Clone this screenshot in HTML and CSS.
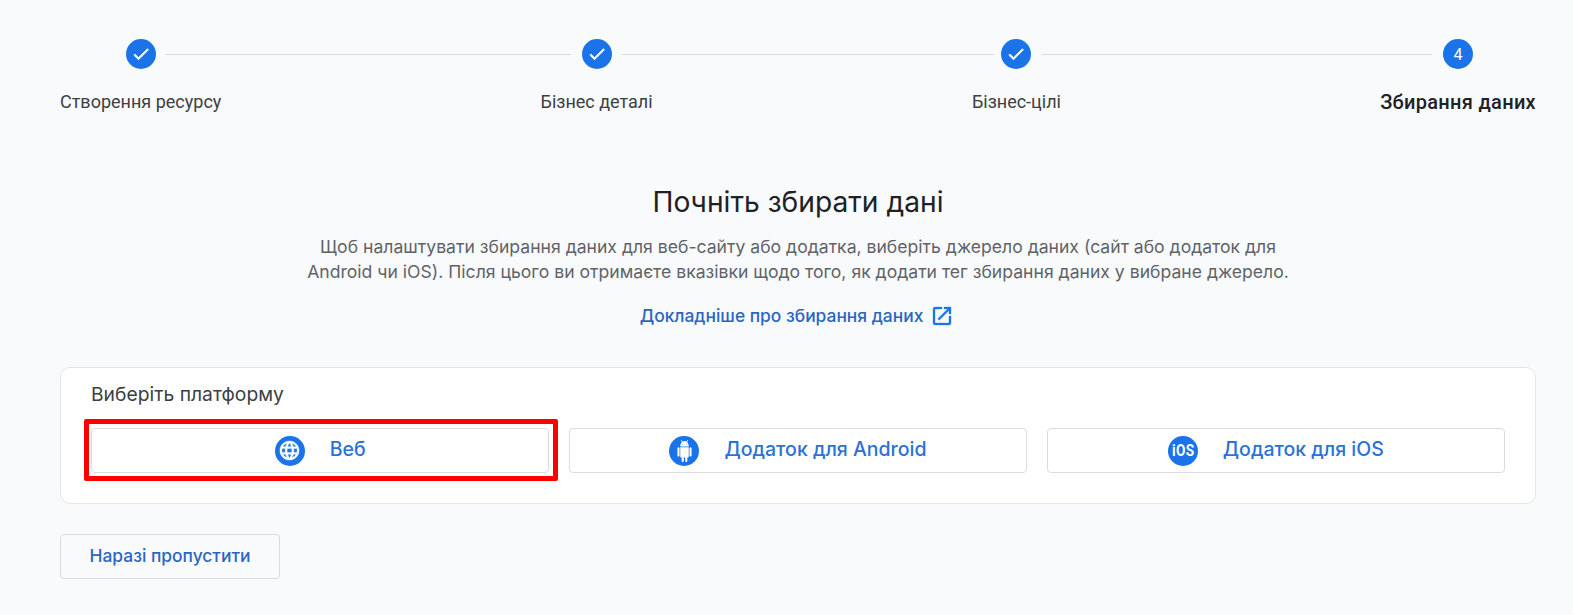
FILE: index.html
```html
<!DOCTYPE html>
<html lang="uk">
<head>
<meta charset="utf-8">
<title>Збирання даних</title>
<link rel="stylesheet" href="styles.css">
</head>
<body>
<main class="page">
  <ol class="stepper">
    <li class="step step-a">
      <span class="dot"><svg viewBox="0 0 24 24" class="check"><path d="M9 16.17 4.83 12l-1.42 1.41L9 19 21 7l-1.41-1.41z"/></svg></span>
      <span class="step-label">Створення ресурсу</span>
    </li>
    <li class="step step-b">
      <span class="dot"><svg viewBox="0 0 24 24" class="check"><path d="M9 16.17 4.83 12l-1.42 1.41L9 19 21 7l-1.41-1.41z"/></svg></span>
      <span class="step-label">Бізнес деталі</span>
    </li>
    <li class="step step-c">
      <span class="dot"><svg viewBox="0 0 24 24" class="check"><path d="M9 16.17 4.83 12l-1.42 1.41L9 19 21 7l-1.41-1.41z"/></svg></span>
      <span class="step-label">Бізнес-цілі</span>
    </li>
    <li class="step step-d">
      <span class="dot">4</span>
      <span class="step-label current">Збирання даних</span>
    </li>
  </ol>

  <section class="intro">
    <h1 class="title">Почніть збирати дані</h1>
    <p class="lead">Щоб налаштувати збирання даних для веб-сайту або додатка, виберіть джерело даних (сайт або додаток для<br>Android чи iOS). Після цього ви отримаєте вказівки щодо того, як додати тег збирання даних у вибране джерело.</p>
    <a class="learn" href="#"><span class="learn-text">Докладніше про збирання даних</span>
      <svg viewBox="0 0 24 24" class="ext"><path d="M19 19H5V5h7V3H5c-1.11 0-2 .9-2 2v14c0 1.1.89 2 2 2h14c1.1 0 2-.9 2-2v-7h-2v7zM14 3v2h3.59l-9.83 9.83 1.41 1.41L19 6.41V10h2V3h-7z"/></svg>
    </a>
  </section>

  <section class="card">
    <h2 class="card-title">Виберіть платформу</h2>
    <div class="platforms">
      <button class="platform highlighted" type="button">
        <span class="badge"><svg viewBox="0 0 24 24" class="globe"><path d="M11.99 2C6.47 2 2 6.48 2 12s4.47 10 9.99 10C17.52 22 22 17.52 22 12S17.52 2 11.99 2zm6.93 6h-2.95c-.32-1.25-.78-2.45-1.38-3.56 1.84.63 3.37 1.91 4.33 3.56zM12 4.04c.83 1.2 1.48 2.53 1.91 3.96h-3.82c.43-1.43 1.08-2.76 1.91-3.96zM4.26 14C4.1 13.36 4 12.69 4 12s.1-1.36.26-2h3.38c-.08.66-.14 1.32-.14 2 0 .68.06 1.34.14 2H4.26zm.82 2h2.95c.32 1.25.78 2.45 1.38 3.56-1.84-.63-3.37-1.9-4.33-3.56zm2.95-8H5.08c.96-1.66 2.49-2.93 4.33-3.56C8.81 5.55 8.35 6.75 8.03 8zM12 19.96c-.83-1.2-1.48-2.53-1.91-3.96h3.82c-.43 1.43-1.08 2.76-1.91 3.96zM14.34 14H9.66c-.09-.66-.16-1.32-.16-2 0-.68.07-1.35.16-2h4.68c.09.65.16 1.32.16 2 0 .68-.07 1.34-.16 2zm.25 5.56c.6-1.11 1.06-2.31 1.38-3.56h2.95c-.96 1.65-2.49 2.93-4.33 3.56zM16.36 14c.08-.66.14-1.32.14-2 0-.68-.06-1.34-.14-2h3.38c.16.64.26 1.31.26 2s-.1 1.36-.26 2h-3.38z"/></svg></span>
        <span class="platform-name">Веб</span>
      </button>
      <button class="platform" type="button">
        <span class="badge"><svg viewBox="0 0 24 24" preserveAspectRatio="none" class="android"><path d="M6 18c0 .55.45 1 1 1h1v3.5c0 .83.67 1.5 1.5 1.5s1.5-.67 1.5-1.5V19h2v3.5c0 .83.67 1.5 1.5 1.5s1.5-.67 1.5-1.5V19h1c.55 0 1-.45 1-1V8H6v10zM3.5 8C2.67 8 2 8.67 2 9.5v7c0 .83.67 1.5 1.5 1.5S5 17.33 5 16.5v-7C5 8.67 4.33 8 3.5 8zm17 0c-.83 0-1.5.67-1.5 1.5v7c0 .83.67 1.5 1.5 1.5s1.5-.67 1.5-1.5v-7c0-.83-.67-1.5-1.5-1.5zm-4.97-5.84l1.3-1.3c.2-.2.2-.51 0-.71-.2-.2-.51-.2-.71 0l-1.48 1.48C13.85 1.23 12.95 1 12 1c-.96 0-1.86.23-2.66.63L7.85.15c-.2-.2-.51-.2-.71 0-.2.2-.2.51 0 .71l1.31 1.31C6.97 3.26 6 5.01 6 7h12c0-1.99-.97-3.75-2.47-4.84zM10 5H9V4h1v1zm5 0h-1V4h1v1z"/></svg></span>
        <span class="platform-name">Додаток для Android</span>
      </button>
      <button class="platform" type="button">
        <span class="badge ios"><span class="ios-text">iOS</span></span>
        <span class="platform-name">Додаток для iOS</span>
      </button>
    </div>
  </section>

  <button class="skip" type="button"><span class="skip-text">Наразі пропустити</span></button>
</main>
</body>
</html>
```
FILE: styles.css
```css
* { box-sizing: border-box; }
html, body { margin: 0; height: 100%; }
body {
  background: #f9fafc;
  color: #202124;
  font-family: Roboto, "Liberation Sans", sans-serif;
  overflow: hidden;
}
.page { padding: 39px 37px 0 60px; }

.stepper {
  display: flex;
  justify-content: space-between;
  list-style: none;
  margin: 0;
  padding: 0;
}
.step {
  position: relative;
  display: flex;
  flex-direction: column;
  align-items: center;
  gap: 22px;
}
.step:not(.step-d)::after {
  content: "";
  position: absolute;
  top: 15px;
  left: calc(50% + 25px);
  height: 1px;
  background: #dadce0;
}
.step-a::after { width: 405px; }
.step-b::after { width: 372px; }
.step-c::after { width: 391px; }
.dot {
  width: 30px;
  height: 30px;
  border-radius: 50%;
  background: #1a73e8;
  color: #fff;
  display: flex;
  align-items: center;
  justify-content: center;
  font-size: 16px;
}
.check { width: 20px; height: 20px; fill: #fff; stroke: #fff; stroke-width: .8; }
.step-label { font-size: 18px; line-height: 22px; color: #3c4043; white-space: nowrap; }
.step-label.current { font-weight: 500; color: #202124; font-size: 20px; letter-spacing: .3px; }

.intro { text-align: center; margin-top: 71px; }
.title {
  margin: 0;
  font-family: Inter, Roboto, sans-serif;
  font-weight: 400;
  font-size: 28.2px;
  line-height: 36px;
  color: #202124;
}
.lead {
  margin: 14px 0 0;
  font-family: Inter, Roboto, sans-serif;
  font-size: 17.6px;
  line-height: 25px;
  color: #5f6368;
}
.learn {
  display: inline-flex;
  align-items: center;
  gap: 9px;
  margin-top: 20px;
  color: #2a65c4;
  font-family: Inter, Roboto, sans-serif;
  font-weight: 500;
  font-size: 17.4px;
  text-decoration: none;
}
.learn-text { margin-bottom: 1px; }
.ext { width: 24px; height: 24px; fill: #1a73e8; margin-left: -2px; margin-right: 2px; stroke: #1a73e8; stroke-width: .3; }

.card {
  margin-top: 39px;
  height: 137px;
  background: #fff;
  border: 1px solid #e3e5e8;
  border-radius: 10px;
  padding: 13px 30px;
}
.card-title {
  margin: 0;
  font-family: Inter, Roboto, sans-serif;
  font-weight: 400;
  font-size: 19.3px;
  line-height: 26px;
  color: #3c4043;
}
.platforms {
  display: grid;
  grid-template-columns: repeat(3, 1fr);
  gap: 19.5px;
  margin-top: 21px;
}
.platform {
  position: relative;
  height: 45px;
  display: flex;
  align-items: center;
  justify-content: center;
  gap: 25px;
  background: #fff;
  border: 1px solid #dadce0;
  border-radius: 4px;
  color: #2a72d8;
  font-family: Inter, Roboto, sans-serif;
  font-weight: 500;
  font-size: 19.5px;
}
.platform-name { margin-bottom: 3px; }
.highlighted::after {
  content: "";
  position: absolute;
  top: -10px;
  bottom: -9px;
  left: -8px;
  right: -10px;
  border: 5px solid #f00;
  border-radius: 2px;
}
.badge {
  width: 30px;
  height: 30px;
  border-radius: 50%;
  background: #1a73e8;
  color: #fff;
  display: flex;
  align-items: center;
  justify-content: center;
}
.globe { width: 23px; height: 23px; fill: #fff; stroke: #fff; stroke-width: .4; }
.android { width: 17px; height: 22px; fill: #fff; }
.ios { font-family: Roboto, sans-serif; font-size: 16px; font-weight: 700; }
.ios-text { display: inline-block; transform: scale(.85, 1); letter-spacing: .5px; }

.skip {
  display: block;
  margin-top: 30px;
  width: 220px;
  height: 45px;
  background: transparent;
  border: 1px solid #dadce0;
  border-radius: 4px;
  color: #2a65c4;
  font-family: Inter, Roboto, sans-serif;
  font-weight: 500;
  font-size: 17.4px;
}
.skip-text { display: block; margin-bottom: 2px; }
```
